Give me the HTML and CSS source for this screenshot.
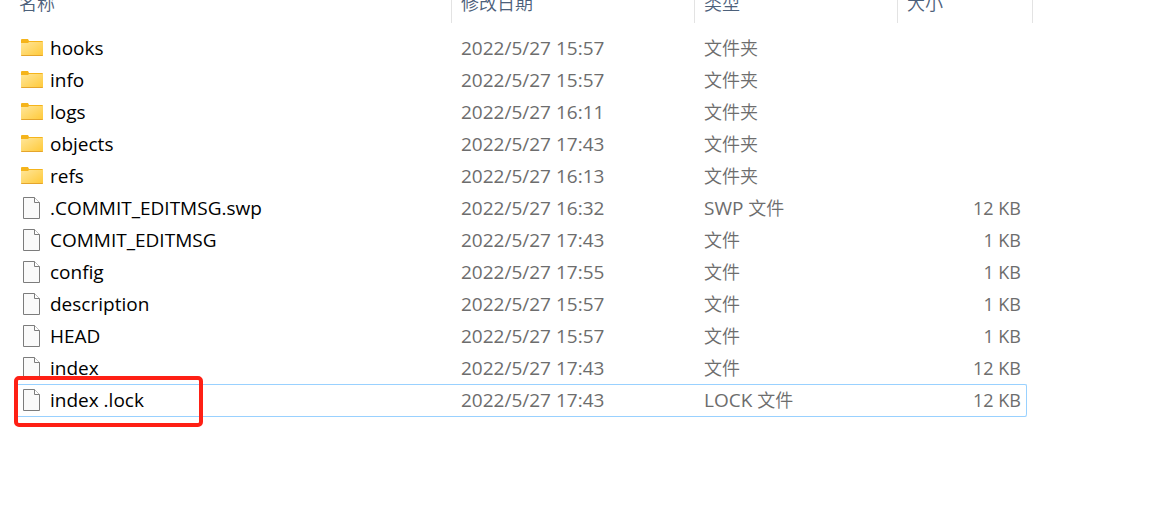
FILE: index.html
```html
<!DOCTYPE html>
<html lang="zh-CN">
<head>
<meta charset="utf-8">
<title>.git</title>
<link rel="stylesheet" href="styles.css">
</head>
<body>
<svg class="defs" width="0" height="0" aria-hidden="true">
  <defs>
    <linearGradient id="folder-fill" x1="0" y1="0" x2="1" y2="1">
      <stop offset="0" stop-color="#ffe69a"/>
      <stop offset="1" stop-color="#ffc937"/>
    </linearGradient>
    <symbol id="folder" viewBox="0 0 22 24">
      <path d="M0 4Q0 3 1 3H7L8 5H21Q22 5 22 6V8H0Z" fill="#f5b41b"/>
      <path d="M0 7H7L8 6H22V19Q22 20 21 20H1Q0 20 0 19Z" fill="url(#folder-fill)"/>
      <path d="M0 19H22Q22 20 21 20H1Q0 20 0 19Z" fill="#e5a52c"/>
    </symbol>
    <symbol id="file" viewBox="0 0 22 24">
      <path d="M2.500 1.500H13.500L18.500 6.500V22.500H2.500Z" fill="#fafafa" stroke="#7c7c7c"/>
      <path d="M13.500 1.500V6.500H18.500" fill="#fff" stroke="#7c7c7c"/>
    </symbol>
  </defs>
</svg>
<main class="pane">
  <table class="files">
    <colgroup><col class="c-name"><col class="c-date"><col class="c-type"><col class="c-size"><col class="c-edge"></colgroup>
    <thead>
      <tr><th>名称</th><th>修改日期</th><th>类型</th><th colspan="2">大小</th></tr>
    </thead>
    <tbody>
      <tr><td><span class="name"><svg class="icon"><use href="#folder"/></svg>hooks</span></td><td>2022/5/27 15:57</td><td>文件夹</td><td></td></tr>
      <tr><td><span class="name"><svg class="icon"><use href="#folder"/></svg>info</span></td><td>2022/5/27 15:57</td><td>文件夹</td><td></td></tr>
      <tr><td><span class="name"><svg class="icon"><use href="#folder"/></svg>logs</span></td><td>2022/5/27 16:11</td><td>文件夹</td><td></td></tr>
      <tr><td><span class="name"><svg class="icon"><use href="#folder"/></svg>objects</span></td><td>2022/5/27 17:43</td><td>文件夹</td><td></td></tr>
      <tr><td><span class="name"><svg class="icon"><use href="#folder"/></svg>refs</span></td><td>2022/5/27 16:13</td><td>文件夹</td><td></td></tr>
      <tr><td><span class="name"><svg class="icon"><use href="#file"/></svg>.COMMIT_EDITMSG.swp</span></td><td>2022/5/27 16:32</td><td><span class="ext">SWP </span>文件</td><td>12 KB</td></tr>
      <tr><td><span class="name"><svg class="icon"><use href="#file"/></svg>COMMIT_EDITMSG</span></td><td>2022/5/27 17:43</td><td>文件</td><td>1 KB</td></tr>
      <tr><td><span class="name"><svg class="icon"><use href="#file"/></svg>config</span></td><td>2022/5/27 17:55</td><td>文件</td><td>1 KB</td></tr>
      <tr><td><span class="name"><svg class="icon"><use href="#file"/></svg>description</span></td><td>2022/5/27 15:57</td><td>文件</td><td>1 KB</td></tr>
      <tr><td><span class="name"><svg class="icon"><use href="#file"/></svg>HEAD</span></td><td>2022/5/27 15:57</td><td>文件</td><td>1 KB</td></tr>
      <tr><td><span class="name"><svg class="icon"><use href="#file"/></svg>index</span></td><td>2022/5/27 17:43</td><td>文件</td><td>12 KB</td></tr>
      <tr class="focused"><td><span class="name"><svg class="icon"><use href="#file"/></svg>index .lock</span><span class="marker"></span></td><td>2022/5/27 17:43</td><td><span class="ext">LOCK </span>文件</td><td>12 KB</td></tr>
    </tbody>
  </table>
</main>
</body>
</html>
```
FILE: styles.css
```css
body {
  margin: 0;
  background: #fff;
  color: #6d6d6d;
  font: 18px/24px "Open Sans", "Noto Sans CJK SC", sans-serif;
}
.defs {
  position: absolute;
}
/* The list is scrolled slightly, so the header is cut at the top edge. */
.pane {
  display: flow-root;
  box-sizing: border-box;
  min-height: 100vh;
  padding-bottom: 24px;
}
.files {
  margin: -16px 0 0 16px;
  table-layout: fixed;
  width: 1017px;
  border-collapse: separate;
  border-spacing: 0;
}
.c-name { width: 436px; }
.c-date { width: 243px; }
.c-type { width: 203px; }
.c-size { width: 129px; }
.c-edge { width: 6px; }
th, td {
  box-sizing: border-box;
  padding: 0 9px;
  text-align: left;
  white-space: nowrap;
}
th {
  height: 39px;
  padding-bottom: 2px;
  border-right: 1px solid #e3e3e3;
  color: #4c607a;
  font-weight: 350;
}
th:first-child {
  padding-left: 3px;
}
tbody::before {
  content: "";
  display: table-row;
  height: 9px;
}
td {
  height: 32px;
  padding-bottom: 2px;
  border-top: 1px solid transparent;
}
td:first-child {
  position: relative;
  padding-left: 5px;
  color: #000;
}
td:nth-child(-n+2) {
  font-size: 19px;
}
td:nth-child(3) {
  font-weight: 350;
}
.ext {
  font-size: 19px;
  font-weight: 400;
}
td:nth-child(4) {
  padding-right: 6px;
  text-align: right;
}
.name {
  display: flex;
  align-items: center;
  gap: 7px;
}
.icon {
  width: 22px;
  height: 24px;
  flex: none;
}
.focused td {
  border-top-color: #99d1ff;
  box-shadow: 0 1px 0 #99d1ff;
}
.focused td:last-child {
  border-right: 1px solid #99d1ff;
  padding-right: 5px;
  border-radius: 0 2px 2px 0;
}
.marker {
  position: absolute;
  box-sizing: border-box;
  top: -9px;
  left: -2px;
  width: 189px;
  height: 51px;
  border: 4px solid #fe2015;
  border-radius: 5px;
}
```
